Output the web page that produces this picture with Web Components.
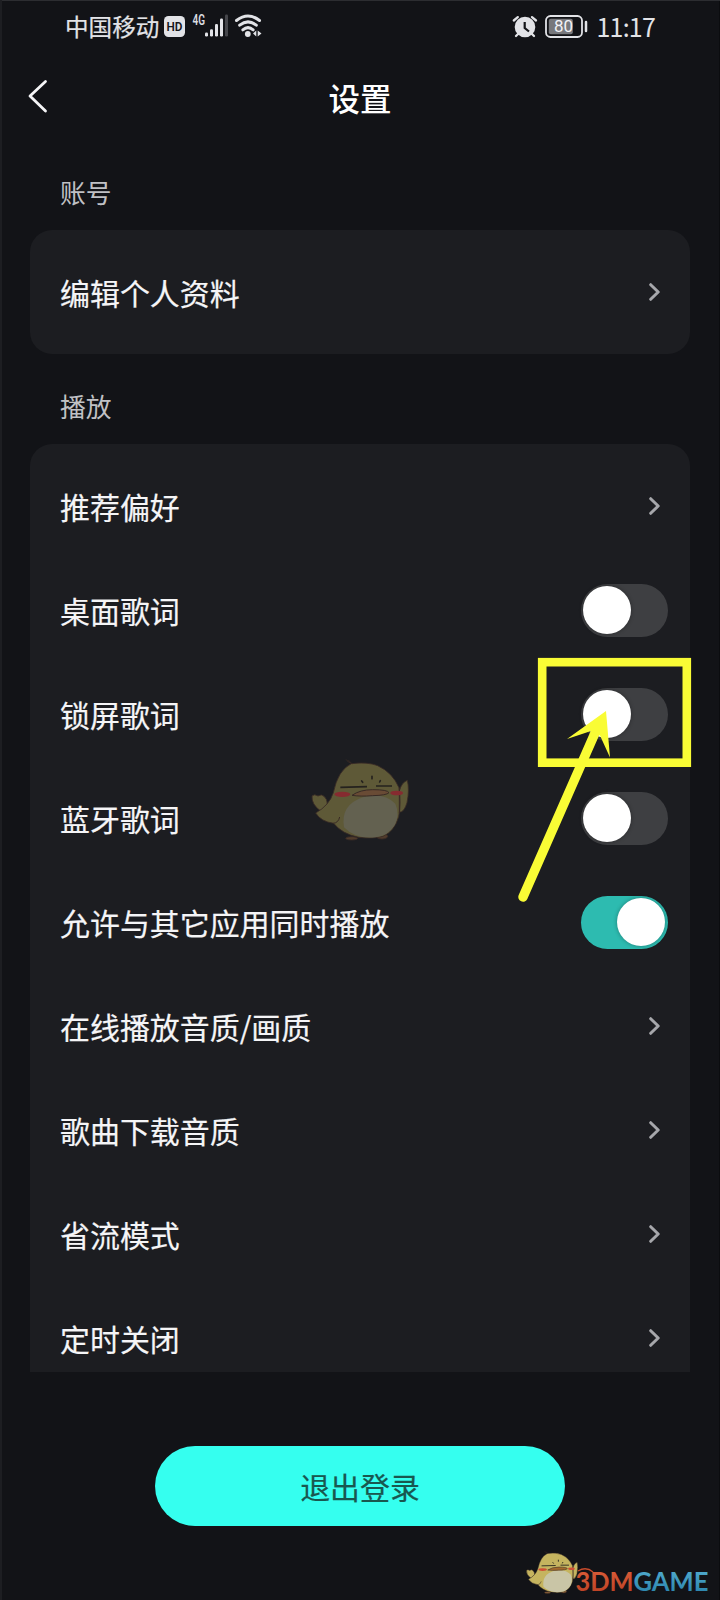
<!DOCTYPE html>
<html lang="zh-CN">
<head>
<meta charset="utf-8">
<title>设置</title>
<style>
html,body{margin:0;background:#121317}
body{font-family:"Noto Sans CJK SC",sans-serif;color:#f5f5f7}
</style>
</head>
<body>
<settings-app></settings-app>
<script>
const define = (name, html, init) => customElements.define(name, class extends HTMLElement {
  constructor() {
    super();
    const t = document.createElement('template');
    t.innerHTML = html;
    this.attachShadow({ mode: 'open' }).append(t.content.cloneNode(true));
  }
  connectedCallback() { if (init) init(this); }
});

define('status-bar', `
<style>
:host{display:flex;height:53px;align-items:center;padding:0 65px;box-sizing:border-box;color:#e2e3e7;font-size:23.600px;line-height:1}
span{white-space:nowrap}
svg{display:block;flex:none}
.op{width:99px;-webkit-text-stroke:.2px}
.time{margin-left:9px;letter-spacing:-.8px;margin-right:0;font:400 25px/1 "Noto Sans CJK SC",sans-serif}
.gap{flex:1}
</style>
<span class="op">中国移动</span>
<svg width="100" height="53" viewBox="0 0 100 53">
  <rect x="0" y="16" width="21" height="21" rx="4.5" fill="#e2e3e7"/>
  <text x="10.5" y="31.300" text-anchor="middle" font-family="Roboto" font-weight="600" font-size="13.500" textLength="16" lengthAdjust="spacingAndGlyphs" fill="#15161a">HD</text>
  <text x="28.5" y="25" font-family="Roboto" font-weight="600" font-size="14" textLength="12.500" lengthAdjust="spacingAndGlyphs" fill="#dcdde1">4G</text>
  <g fill="#e2e3e7"><rect x="41" y="32.5" width="3" height="4" rx="1.2"/><rect x="46" y="29.3" width="3" height="7.2" rx="1.2"/><rect x="51" y="24" width="3" height="12.5" rx="1.2"/><rect x="56" y="18.5" width="3" height="18" rx="1.2"/><rect x="61" y="14.5" width="3" height="22" rx="1.2" fill="#45464b"/></g>
  <g fill="none" stroke="#e2e3e7" stroke-width="3" stroke-linecap="round"><path d="M72.5 20.5Q84 11.5 95.500 20.5"/><path d="M75.7 25.2Q84 18.6 92.300 25.2"/><path d="M78.800 29.800Q84 25.5 89.200 29.800"/></g>
  <circle cx="83.800" cy="34" r="2.900" fill="#e2e3e7"/>
  <path d="M92.3 30.500v6L89 33.500zM93.700 30.500v6L97.500 33.500z" fill="#e2e3e7"/>
</svg>
<div class="gap"></div>
<svg width="76" height="53" viewBox="512 0 76 53">
  <g fill="none" stroke="#e2e3e7" stroke-width="2.300" stroke-linecap="round"><path d="M513.800 20.500l4-3.400M536 20.500l-4-3.400M518 34l-2 2M532 34l2 2"/></g>
  <circle cx="525" cy="27" r="10.300" fill="#e2e3e7"/><path d="M524.700 22v6l4.300 3.500" fill="none" stroke="#15161a" stroke-width="2.200"/>
  <rect x="546" y="16" width="36" height="21" rx="4.500" fill="none" stroke="#e2e3e7" stroke-width="1.800"/>
  <rect x="548.800" y="18.800" width="24" height="15.400" rx="2" fill="#77787c"/>
  <path d="M586 22v9" stroke="#e2e3e7" stroke-width="2.500" stroke-linecap="round"/>
  <text x="563.500" y="32.200" text-anchor="middle" font-family="Roboto" font-weight="400" font-size="17" fill="#f2f2f6">80</text>
</svg>
<span class="time">11:17</span>`);

define('title-bar', `
<style>
:host{display:grid;grid-template-columns:60px 1fr 60px;height:92px;align-items:center;color:#fff}
h1{margin:0;padding-bottom:2px;text-align:center;font-size:31.500px;font-weight:500;line-height:1}
svg{display:block}
</style>
<svg width="60" height="92" viewBox="0 53 60 92"><path d="M45.500 81.500L30 96l15.500 15" fill="none" stroke="#f5f5f7" stroke-width="2.800" stroke-linecap="round" stroke-linejoin="round"/></svg>
<h1><slot></slot></h1>`);

define('settings-group', `
<style>
:host{display:block}
h2{margin:0;padding:var(--head-pad,13px) 0 0 30px;box-sizing:border-box;height:var(--head,90px);display:flex;align-items:center;font-size:25.800px;font-weight:400;color:#c0c1c5;line-height:1}
.card{background:#1c1d21;border-radius:22px;padding:10px 0;overflow:hidden}
:host([clipped]) .card{border-radius:22px 22px 0 0;padding-bottom:0;height:918px}
</style>
<h2></h2><div class="card"><slot></slot></div>`,
el => { el.shadowRoot.querySelector('h2').textContent = el.getAttribute('heading'); });

define('settings-row', `
<style>
:host{display:flex;height:104px;align-items:center;justify-content:space-between;padding:0 22px 0 30px;font-size:29.950px;line-height:1}
.label{padding-top:1px;-webkit-text-stroke:.2px}
</style>
<span class="label"><slot></slot></span><slot name="end"></slot>`);

define('chevron-icon', `
<style>:host{display:block;margin-right:8px}svg{display:block}</style>
<svg width="12" height="20" viewBox="0 0 12 20"><path d="M2.700 2.700L10.200 10l-7.500 7.300" fill="none" stroke="#a6a7ab" stroke-width="3" stroke-linecap="round" stroke-linejoin="round"/></svg>`);

define('toggle-switch', `
<style>
:host{display:flex;box-sizing:border-box;width:87px;height:53px;border-radius:27px;padding:0 3px 0 2px;align-items:center;background:#3e3f42}
i{width:48px;height:48px;border-radius:50%;background:#fff;box-shadow:0 0 4px #0005}
:host([on]){background:#2dbbb0;justify-content:flex-end}
</style><i></i>`);

define('pill-button', `
<style>
:host{display:flex;width:410px;height:80px;border-radius:40px;background:#35ffef;align-items:center;justify-content:center;font-size:29.900px;line-height:1;color:#19574f}
span{padding-top:1px;-webkit-text-stroke:.2px}
</style><span><slot></slot></span>`);

define('chick-mascot', `
<style>:host{display:block}svg{display:block;width:100%;height:100%}</style>
<svg viewBox="33 42 294 246" preserveAspectRatio="none">
  <g stroke="#392a25" stroke-width="2.500" stroke-linejoin="round">
    <path d="M298 138Q305 112 322 106Q329 135 321 173Q313 201 298 202Z" fill="var(--body,#5e5937)"/>
    <path d="M62 198Q34 178 36 153Q43 146 54 153Q65 146 72 154Q82 162 82 178Z" fill="var(--body,#5e5937)"/>
    <ellipse cx="155" cy="280" rx="18" ry="5" fill="var(--foot,#503b2b)"/><ellipse cx="246" cy="274" rx="17" ry="8" fill="var(--foot,#503b2b)"/>
    <path d="M154 56Q203 50 233 62Q277 82 297 128Q304 176 296 215Q284 258 249 274Q220 282 176 277Q126 267 101 235Q63 230 47 204Q88 181 100 143Q114 75 154 56Z" fill="var(--body,#5e5937)"/>
    <path d="M157 56Q143 53 138 43M155 55Q147 46 143 47" fill="none"/>
  </g>
  <path d="M132 247Q121 180 188 157Q250 140 286 176Q300 208 284 241Q263 274 226 277Q166 283 132 247Z" fill="var(--belly,#636150)"/>
  <path d="M99 235Q115 234 119 216M298 128v76" fill="none" stroke="#392a25" stroke-width="3"/>
  <ellipse cx="127" cy="148" rx="24" ry="8" fill="var(--cheek,#862b30)"/><ellipse cx="290" cy="144" rx="19" ry="7" fill="var(--cheek,#862b30)"/>
  <path d="M156 151Q180 134 218 134Q263 134 267 143Q260 151 218 152Q180 155 156 151Z" fill="var(--beak,#694b35)" stroke="#392a25" stroke-width="3"/>
  <path d="M121 127l80-2M228 123h48" stroke="#25221e" stroke-width="5"/>
  <path d="M216 94v7M185 108l3 4M241 107l-2 4" stroke="#25221e" stroke-width="5" stroke-linecap="round"/>
</svg>`);

define('brand-logo', `
<style>
:host{display:flex;width:184px;height:46px}
chick-mascot{width:52px;height:43px;--body:#c5b45f;--belly:#c9c5a6;--cheek:#d04e35;--beak:#a36a2c;--foot:#8c6038}
svg{display:block;margin-left:-4px}
text{font-family:Lato,sans-serif;font-weight:700}
</style>
<chick-mascot></chick-mascot>
<svg width="136" height="46" viewBox="574 1551 136 46">
  <defs>
    <linearGradient id="o" x2="0" y2="1"><stop stop-color="#df623c"/><stop offset="1" stop-color="#b83e22"/></linearGradient>
    <linearGradient id="b" x2="0" y2="1"><stop stop-color="#58b2d3"/><stop offset="1" stop-color="#267fa8"/></linearGradient>
  </defs>
  <text x="575.500" y="1590.500" font-size="26" textLength="58" lengthAdjust="spacingAndGlyphs" fill="url(#o)">3DM</text>
  <text x="633.500" y="1590.500" font-size="26" textLength="75" lengthAdjust="spacingAndGlyphs" fill="url(#b)">GAME</text>
  <path d="M578 1571q8-5 15 1" fill="none" stroke="#c84b2c" stroke-width="1.300"/>
</svg>`);

define('pointer-note', `
<style>:host{display:block;width:190px;height:260px}svg{display:block}</style>
<svg width="190" height="260" viewBox="510 650 190 260">
  <rect x="542.200" y="662.200" width="144.600" height="100.500" fill="none" stroke="#f9fc35" stroke-width="8.600"/>
  <path d="M523 897L595 733" stroke="#f9fc35" stroke-width="9.400" stroke-linecap="round"/>
  <path d="M606 711L567 739L591 731L600 735.500L610 757.500Z" fill="#f9fc35"/>
</svg>`);

define('settings-app', `
<style>
:host{display:flex;flex-direction:column;position:relative;box-sizing:border-box;width:720px;height:1600px;background:#121317;overflow:hidden;box-shadow:inset 2px 0 #1d1e22,inset 0 1px #2c2d31,inset -1px 0 #0b0c0f}
main{padding:0 30px;flex:none}
main settings-group:first-child{--head:85px;--head-pad:8px}
footer{display:flex;justify-content:center;padding-top:74px}
.over{position:absolute}
.bird{left:311px;top:759px;width:98px;height:82px}
.note{left:510px;top:650px}
.brand{left:526px;top:1551px}
</style>
<status-bar></status-bar>
<title-bar>设置</title-bar>
<main>
  <settings-group heading="账号">
    <settings-row>编辑个人资料<chevron-icon slot="end"></chevron-icon></settings-row>
  </settings-group>
  <settings-group heading="播放" clipped>
    <settings-row>推荐偏好<chevron-icon slot="end"></chevron-icon></settings-row>
    <settings-row>桌面歌词<toggle-switch slot="end"></toggle-switch></settings-row>
    <settings-row>锁屏歌词<toggle-switch slot="end"></toggle-switch></settings-row>
    <settings-row>蓝牙歌词<toggle-switch slot="end"></toggle-switch></settings-row>
    <settings-row>允许与其它应用同时播放<toggle-switch slot="end" on></toggle-switch></settings-row>
    <settings-row>在线播放音质/画质<chevron-icon slot="end"></chevron-icon></settings-row>
    <settings-row>歌曲下载音质<chevron-icon slot="end"></chevron-icon></settings-row>
    <settings-row>省流模式<chevron-icon slot="end"></chevron-icon></settings-row>
    <settings-row>定时关闭<chevron-icon slot="end"></chevron-icon></settings-row>
  </settings-group>
</main>
<footer><pill-button>退出登录</pill-button></footer>
<chick-mascot class="over bird"></chick-mascot>
<pointer-note class="over note"></pointer-note>
<brand-logo class="over brand"></brand-logo>`);
</script>
</body>
</html>
